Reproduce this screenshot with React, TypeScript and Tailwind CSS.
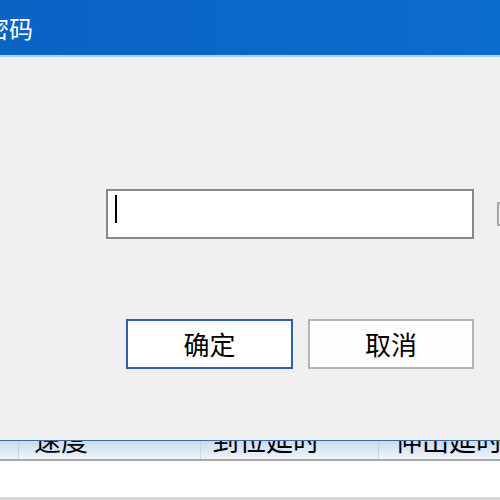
import React from "react";

const cjk = { fontFamily: '"Noto Sans CJK SC", "Noto Sans", sans-serif' };

export default function App() {
  return (
    <div className="w-[500px] h-[500px] overflow-hidden bg-white flex flex-col" style={cjk}>
      {/* dialog */}
      <div className="h-[441px] shrink-0 flex flex-col bg-[#f0f0f0] border-b border-[#3a6a9e]">
        <div className="h-[55px] shrink-0 bg-gradient-to-r from-[#0b63c4] to-[#0a6ccc] flex items-center overflow-hidden">
          <span className="ml-[-15px] text-[24px] leading-none text-white whitespace-nowrap">密码</span>
        </div>
        <div className="h-[2px] shrink-0 bg-[#9fd6f0]" />
        <div className="flex-1 flex flex-col">
          <div className="mt-[132px] pl-[106px] flex items-start">
            <div className="w-[368px] h-[50px] shrink-0 border-2 border-[#8a8a8a] bg-white flex items-start">
              <div className="ml-[7px] mt-[4px] w-[2px] h-[28px] bg-black" />
            </div>
            <div className="ml-[23px] mt-[13px] w-[12px] h-[24px] shrink-0 border-2 border-[#a8a8a8] bg-[#f4f4f4]" />
          </div>
          <div className="mt-[80px] pl-[126px] flex gap-[15px]">
            <div className="w-[167px] h-[50px] shrink-0 border-2 border-[#2f5fa8] bg-white flex items-center justify-center text-[26px] leading-none text-black">
              确定
            </div>
            <div className="w-[166px] h-[50px] shrink-0 border-2 border-[#b4b4b4] bg-[#fdfdfd] flex items-center justify-center text-[26px] leading-none text-black">
              取消
            </div>
          </div>
        </div>
      </div>
      {/* table header, partly hidden behind the dialog */}
      <div className="h-[20px] shrink-0 flex overflow-hidden bg-gradient-to-b from-[#c9dcf1] to-[#eef4fa] border-b-2 border-[#a9a9a9]">
        <div className="w-[19px] shrink-0 border-r border-[#c8d4e0]" />
        <div className="w-[182px] shrink-0 border-r border-[#c8d4e0] pl-[15px]">
          <div className="mt-[-15px] text-[27px] leading-[28px] text-black whitespace-nowrap">速度</div>
        </div>
        <div className="w-[178px] shrink-0 border-r border-[#c8d4e0] pl-[11px]">
          <div className="mt-[-15px] text-[27px] leading-[28px] text-black whitespace-nowrap">到位延时</div>
        </div>
        <div className="flex-1 pl-[16px]">
          <div className="mt-[-15px] text-[27px] leading-[28px] text-black whitespace-nowrap">伸出延时</div>
        </div>
      </div>
      <div className="h-[36px] shrink-0 bg-white" />
      <div className="flex-1 bg-[#d6d6d6]" />
    </div>
  );
}
